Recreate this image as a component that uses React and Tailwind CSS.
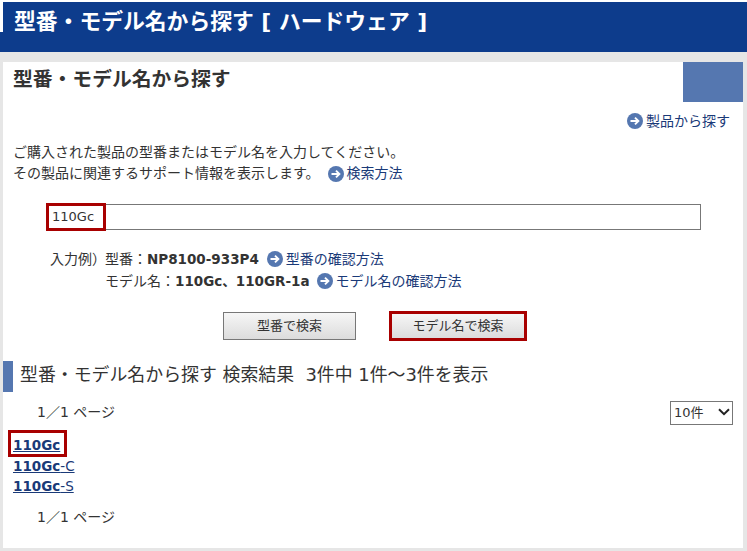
import React from "react";

const font = { fontFamily: '"DejaVu Sans", "Noto Sans CJK JP", sans-serif' };

function ArrowLink({ children, className = "" }) {
    return (
        <a href="#" className={"inline-flex items-center gap-[3px] text-[#1a3a78] " + className}>
            <svg width="16" height="16" viewBox="0 0 16 16" className="shrink-0">
                <circle cx="8" cy="8" r="8" fill="#5577b0" />
                <path d="M3.5 8h8M8 4.6 11.4 8 8 11.4" fill="none" stroke="#fff" strokeWidth="1.9" />
            </svg>
            <span>{children}</span>
        </a>
    );
}

function PageCount() {
    return <p className="pl-[34px] text-[14px] leading-5 text-[#333]">1／1 ページ</p>;
}

export default function App() {
    return (
        <div className="w-[747px] h-[551px] overflow-hidden bg-[#e6e6e6] text-[#333]" style={font}>
            <div className="bg-white pt-[2px]">
                <div className="h-[50px] bg-[#0d3c8c] relative">
                    <div className="absolute left-0 top-0 w-[3px] h-[30px] bg-white"></div>
                    <h1 className="pl-[14px] pt-[5px] text-[21.8px] leading-[30px] font-bold text-white">
                        型番・モデル名から探す [ ハードウェア ]
                    </h1>
                </div>
            </div>

            <div className="relative mt-[10px] ml-[3px] mr-[4px] h-[486px] bg-white">
                <div className="absolute right-0 top-0 w-[60px] h-[40px] bg-[#5577b0]"></div>

                <h2 className="pl-[10px] pt-[5px] text-[19.8px] leading-[26px] font-bold">型番・モデル名から探す</h2>

                <div className="flex justify-end pr-[13px] mt-[18px] text-[14px] leading-5">
                    <ArrowLink>製品から探す</ArrowLink>
                </div>

                <div className="pl-[10px] mt-[11px] text-[14px] leading-[21px]">
                    <p>ご購入された製品の型番またはモデル名を入力してください。</p>
                    <p className="flex items-center">
                        その製品に関連するサポート情報を表示します。
                        <ArrowLink className="ml-[8px]">検索方法</ArrowLink>
                    </p>
                </div>

                <div className="relative ml-[43px] mt-[20px] w-[655px] h-[26px] border border-[#777] flex items-center pl-[5px] text-[13px]">
                    110Gc
                    <div className="absolute left-[-1px] top-[-2px] w-[60px] h-[28px] border-[3px] border-[#a80000]"></div>
                </div>

                <div className="mt-[18px] flex text-[14px] leading-[22px]">
                    <span className="pl-[47px] w-[102px] shrink-0 whitespace-nowrap">入力例）</span>
                    <div>
                        <p className="flex items-center">
                            型番：<b className="text-[13.5px]">NP8100-933P4</b>
                            <ArrowLink className="ml-[8px]">型番の確認方法</ArrowLink>
                        </p>
                        <p className="flex items-center">
                            モデル名：<b className="text-[13.5px]">110Gc、110GR-1a</b>
                            <ArrowLink className="ml-[7px]">モデル名の確認方法</ArrowLink>
                        </p>
                    </div>
                </div>

                <div className="mt-[19px] flex items-center text-[13px]">
                    <button className="ml-[220px] w-[133px] h-[28px] border border-[#777] bg-gradient-to-b from-[#f6f6f6] to-[#dcdcdc]">
                        型番で検索
                    </button>
                    <button className="ml-[33px] w-[138px] h-[30px] border-[3px] border-[#a80000] bg-gradient-to-b from-[#f6f6f6] to-[#dcdcdc]">
                        モデル名で検索
                    </button>
                </div>

                <div className="mt-[20px] h-[31px] border-l-[10px] border-[#5577b0] pl-[7px] text-[17.9px] leading-[27px] whitespace-pre">
                    型番・モデル名から探す 検索結果  3件中 1件～3件を表示
                </div>

                <div className="relative mt-[10px]">
                    <PageCount />
                    <div className="absolute right-[10px] top-[-2px] w-[63px] h-[24px]">
                        <select className="w-full h-full appearance-none border border-[#777] bg-white text-[13px] pl-[3px]">
                            <option>10件</option>
                        </select>
                        <svg width="12" height="8" viewBox="0 0 12 8" className="absolute right-[3px] top-[8px] pointer-events-none">
                            <path d="M1 1.2 6 6.2 11 1.2" fill="none" stroke="#222" strokeWidth="2" />
                        </svg>
                    </div>
                </div>

                <div className="mt-[13px] pl-[10px] text-[13.5px] leading-[20.5px] text-[#1a3a78] underline">
                    <div className="relative font-bold w-fit">
                        110Gc
                        <div className="absolute left-[-5px] top-[-5px] w-[59px] h-[27px] border-[3px] border-[#a80000]"></div>
                    </div>
                    <div><b>110Gc</b>-C</div>
                    <div><b>110Gc</b>-S</div>
                </div>

                <div className="mt-[10px]">
                    <PageCount />
                </div>
            </div>
        </div>
    );
}
